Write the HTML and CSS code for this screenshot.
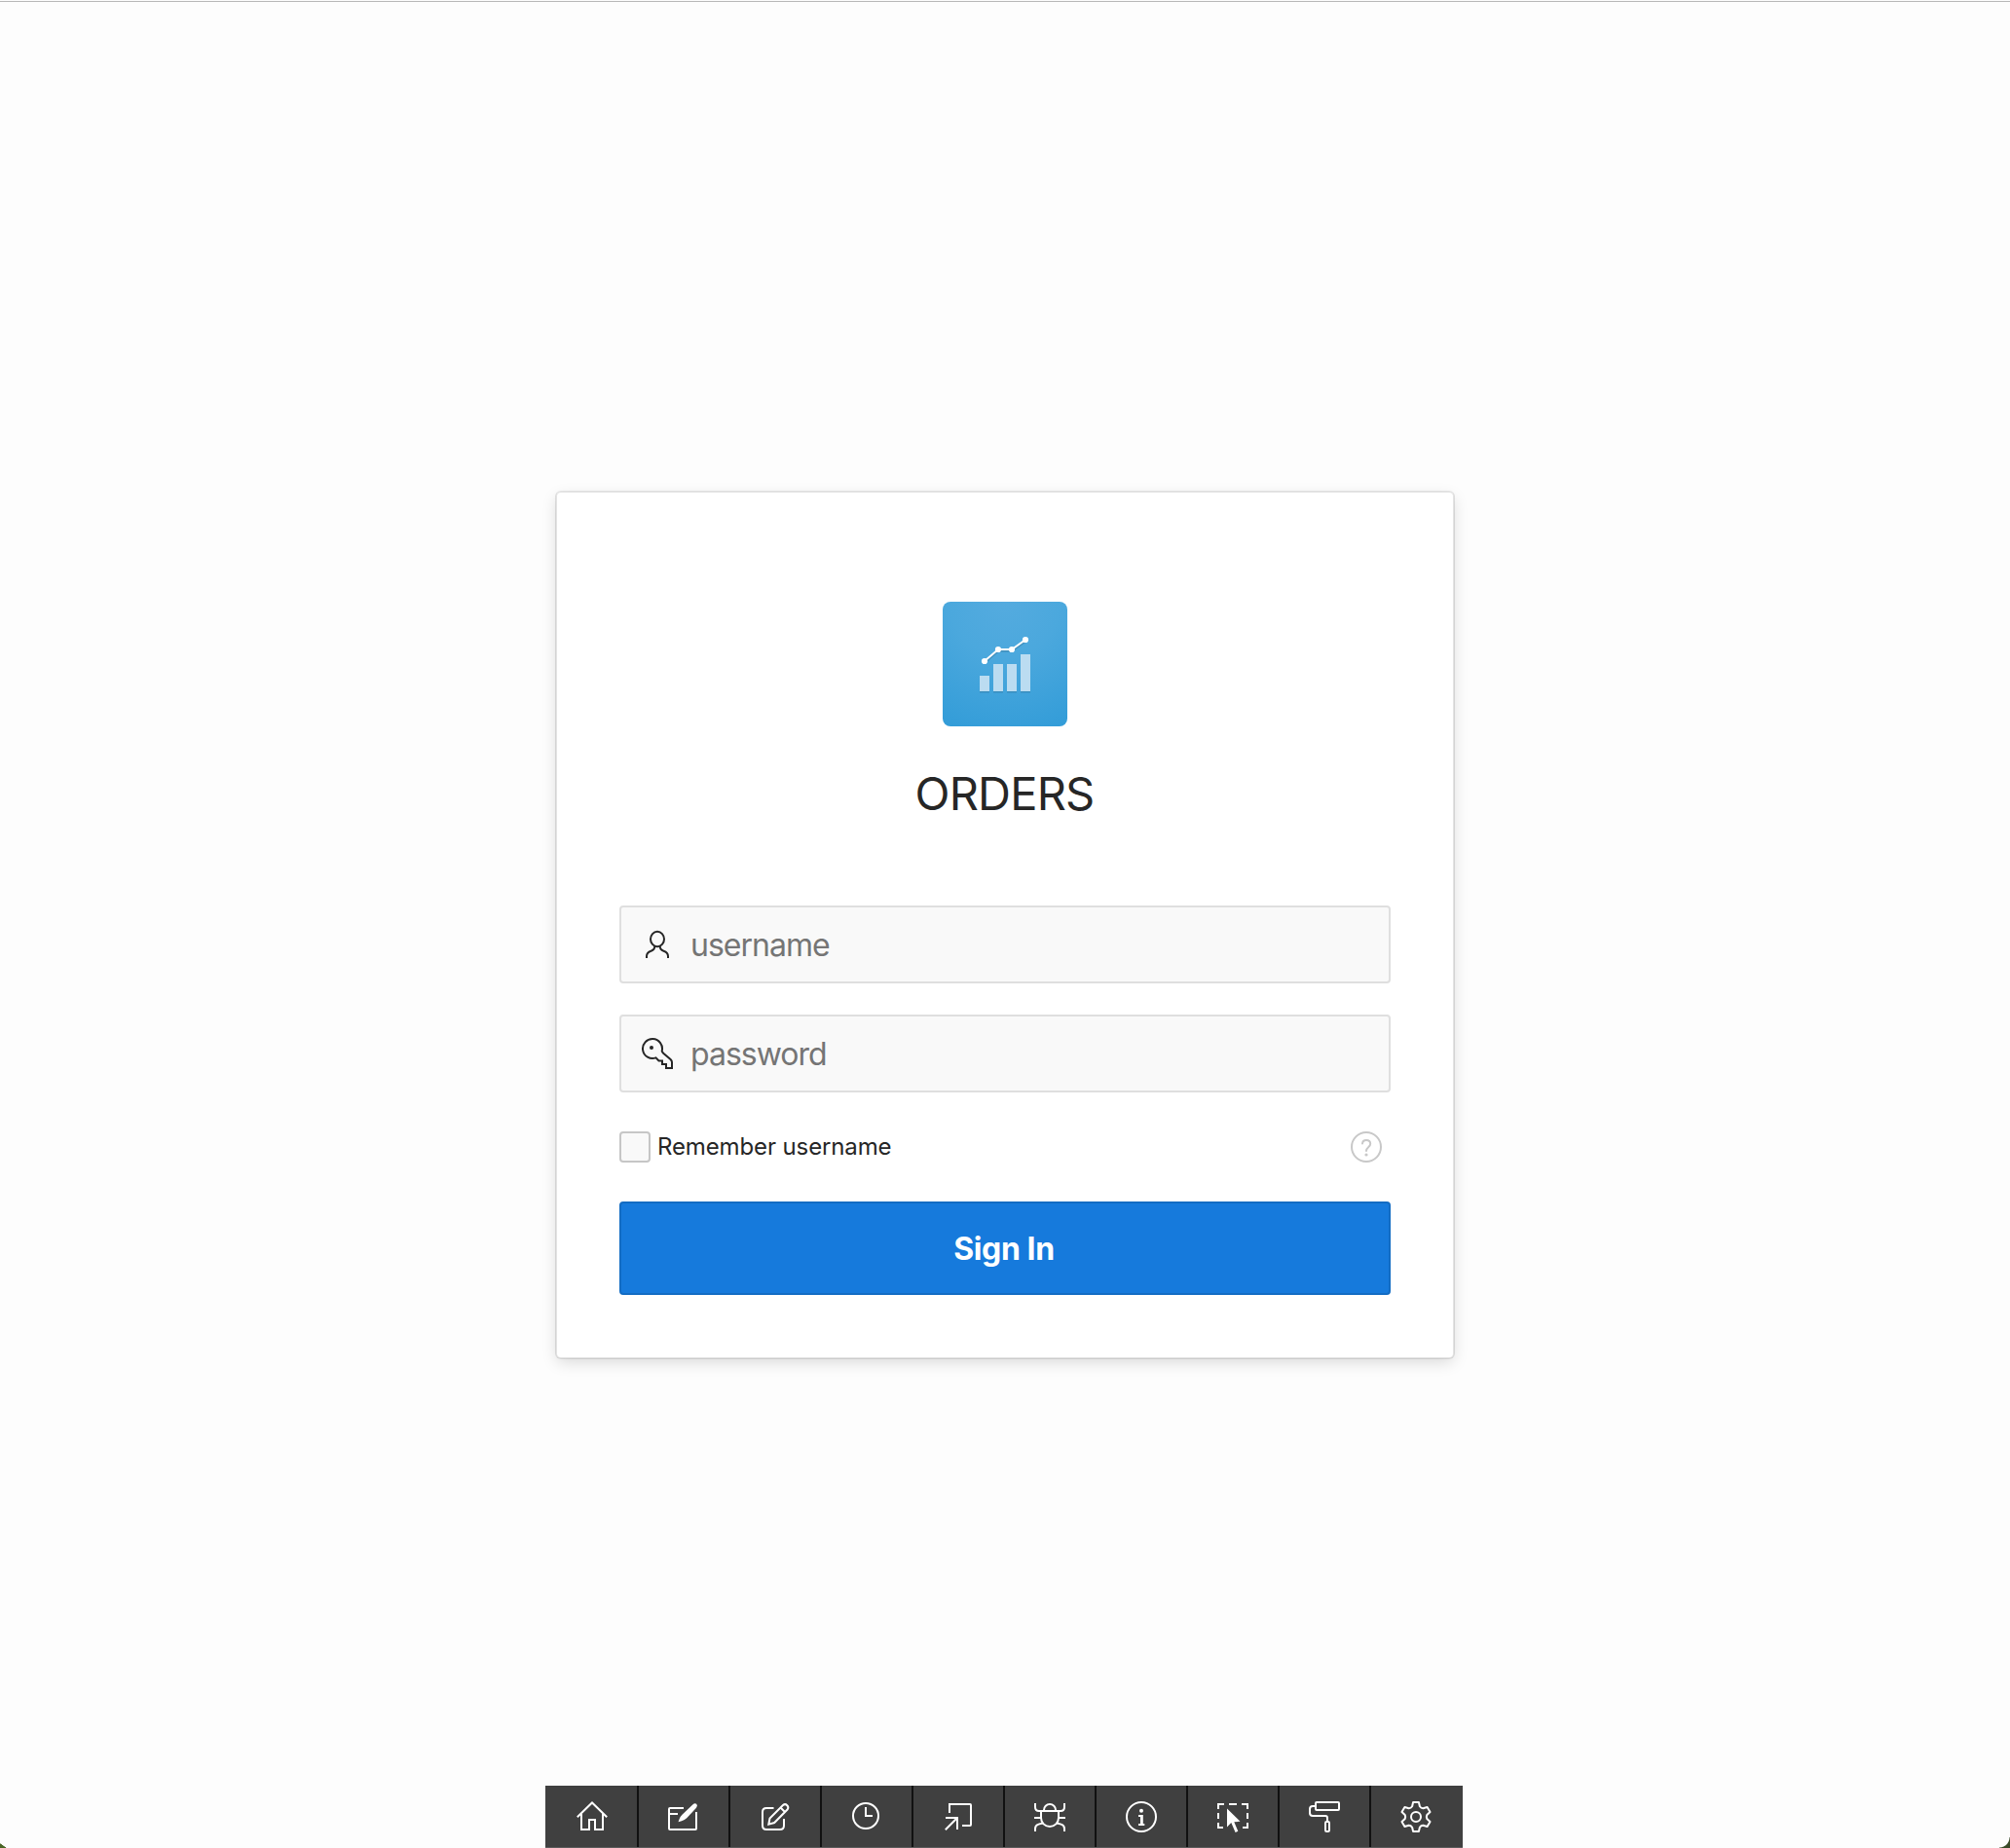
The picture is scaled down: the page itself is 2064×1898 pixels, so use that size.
FILE: index.html
```html
<!DOCTYPE html>
<html lang="en">
<head>
<meta charset="utf-8">
<title>ORDERS - Sign In</title>
<link rel="stylesheet" href="styles.css">
</head>
<body>
<main class="page">
  <form class="card">
    <svg class="app-icon" viewBox="0 0 128 128">
      <g fill="#000" opacity=".13"><path d="M38 77h10v16.500H38zM52 65h10v28.500H52zM66 65h10v28.500H66zM80 55h10v38.500H80z"/></g>
      <path d="M43 62.500L57 50.500H71L85 40.500" fill="none" stroke="#000" stroke-opacity=".13" stroke-width="2.500"/>
      <g fill="#bbdcf1"><path d="M38 76h10v16H38zM52 64h10v28H52zM66 64h10v28H66zM80 54h10v38H80z"/></g>
      <path d="M43 61L57 49H71L85 39" fill="none" stroke="#fff" stroke-width="2"/>
      <g fill="#fff"><circle cx="43" cy="61" r="3.100"/><circle cx="57" cy="49" r="3.100"/><circle cx="71" cy="49" r="3.100"/><circle cx="85" cy="39" r="3.100"/></g>
    </svg>
    <h1 class="title">ORDERS</h1>
    <div class="field">
      <svg class="icon" viewBox="0 0 32 32"><ellipse cx="16" cy="10.500" rx="7" ry="7.700"/><path d="M5 30v-2c0-3.500 2-4.500 4.500-5.300C12 21.800 13.300 21 13.300 18M27 30v-2c0-3.500-2-4.500-4.500-5.300C20 21.800 18.700 21 18.700 18"/></svg>
      <input class="input" type="text" placeholder="username" aria-label="username">
    </div>
    <div class="field">
      <svg class="icon" viewBox="0 0 32 32"><path d="M14.500 20.400A10 10 0 1 1 20.700 13.500C20.900 14.500 21.500 15 22.500 16L29.500 22Q31 23.500 31 25V31H25V27H21V23.500H17.500Z"/><circle class="solid" cx="10" cy="10" r="2"/></svg>
      <input class="input" type="password" placeholder="password" aria-label="password">
    </div>
    <div class="options">
      <label class="remember"><input class="check" type="checkbox"><span>Remember username</span></label>
      <svg class="icon help" viewBox="0 0 32 32"><circle cx="16" cy="16" r="15"/><path stroke-linecap="round" d="M12 12.500C12.200 10.300 13.700 9 16 9c2.400 0 4.200 1.500 4.200 3.700 0 3.500-4.200 3.500-4.200 7.300"/><circle class="solid" cx="16" cy="24" r="1.600"/></svg>
    </div>
    <button class="sign-in" type="button">Sign In</button>
  </form>
</main>
<nav class="toolbar">
  <a class="tool"><svg class="icon" viewBox="0 0 32 32"><path d="M.8 16.300L16 1.500L31.200 16.300M5 13V29H13V19H19V29H27V13"/></svg></a>
  <a class="tool"><svg class="icon" viewBox="0 0 32 32"><path d="M16 7H2Q1 7 1 8V28Q1 29 2 29H28Q29 29 29 28V11M1 13H10"/><path class="solid" d="M10.500 21.200L11.500 18.500Q12.500 15.700 14.500 13.800L25.300 3.500Q27.500 1.500 29.200 2.800Q30.800 4.500 29 6.800L19.200 17.300Q17 19.500 14 20.300Z"/></svg></a>
  <a class="tool"><svg class="icon" viewBox="0 0 32 32"><path d="M14.500 7H7Q3 7 3 11V25Q3 29 7 29H21Q25 29 25 25V18M9.300 23.700L10.500 17.500L24 4A3.200 3.200 0 0 1 28.500 8.500L15.200 22ZM21.500 6.500L26 11"/></svg></a>
  <a class="tool"><svg class="icon" viewBox="0 0 32 32"><circle cx="15" cy="15" r="13"/><path d="M15 6V15H22"/></svg></a>
  <a class="tool"><svg class="icon" viewBox="0 0 32 32"><path d="M7 12V3H28Q29 3 29 4V24Q29 25 28 25H20M3 17H15V29M15 17L2.800 29.200"/></svg></a>
  <a class="tool"><svg class="icon" viewBox="0 0 32 32"><path d="M1 2V6Q1 10 5 10H27Q31 10 31 6V2M7 10V17A9 9 0 0 0 25 17V10M10 10V9A6 6 0 0 1 22 9V10M0 17H7M25 17H32M8.500 22.500L4.500 23.600Q1 24.700 1 28V31M23.500 22.500L27.500 23.600Q31 24.700 31 28V31"/></svg></a>
  <a class="tool"><svg class="icon" viewBox="0 0 32 32"><circle cx="16" cy="16" r="15"/><circle class="solid" cx="16" cy="9.800" r="2"/><path d="M13 15H16.500V24M13 24H19.300"/><path stroke-width="2.600" d="M16.300 14V24"/></svg></a>
  <a class="tool"><svg class="icon" viewBox="0 0 32 32"><path d="M1 8V3H7M12 3H20M25 3H31V8M1 12V18M31 12V18M1 22V27H6M31 22V27H26"/><path class="solid" d="M10 7.500V26.500L14.300 22L18.600 32L21.300 30.800L17.300 21.300L23.500 20.800Z"/></svg></a>
  <a class="tool"><svg class="icon" viewBox="0 0 32 32"><rect x="7" y="1" width="24" height="8" rx="1"/><path d="M7 5H4Q1 5 1 8V12Q1 15 4 15H17Q19 15 19 17V21"/><rect x="17" y="21" width="4" height="10" rx="1.200"/></svg></a>
  <a class="tool"><svg class="icon" viewBox="0 0 32 32"><path stroke-linejoin="round" d="M13.100 1H18.900L19.900 5.200Q21.300 7.300 23.400 7.200L27.550 6L30.500 11L27.300 14Q26.300 16 27.300 18L30.500 21L27.550 26L23.400 24.800Q21.300 24.700 19.900 26.800L18.900 31H13.100L12.100 26.800Q10.700 24.700 8.600 24.800L4.450 26L1.500 21L4.700 18Q5.700 16 4.700 14L1.500 11L4.450 6L8.600 7.200Q10.700 7.300 12.100 5.200Z"/><circle cx="16" cy="16" r="5"/></svg></a>
</nav>
</body>
</html>
```
FILE: styles.css
```css
* { box-sizing: border-box; }
body {
  margin: 0;
  height: 1898px;
  padding-top: 1px;
  display: flex;
  flex-direction: column;
  align-items: center;
  background: #fdfdfd;
  color: #262626;
  font-family: Inter, "Liberation Sans", sans-serif;
  overflow: hidden;
}
/* rounded window corners */
body::before, body::after {
  content: "";
  position: absolute;
  bottom: 0;
}
body::before {
  left: 0;
  width: 7px;
  height: 5px;
  background: linear-gradient(to top right, #4a6526 45%, transparent 52%);
}
body::after {
  right: 0;
  width: 11px;
  height: 11px;
  background: radial-gradient(circle at 0 0, transparent 10px, #3a4a28 11px);
}
.page {
  width: 100%;
  flex: 1;
  border-top: 1px solid #b8b8b8;
  padding-top: 502px;
}
.card {
  width: 924px;
  height: 892px;
  margin: 0 auto;
  padding: 112px 64px 64px;
  display: flex;
  flex-direction: column;
  background: #fff;
  background-clip: padding-box;
  border: 2px solid rgba(0, 0, 0, .1);
  border-top-color: rgba(0, 0, 0, .09);
  border-radius: 6px;
  box-shadow: 0 5px 16px -2px rgba(0, 0, 0, .15);
}
.app-icon {
  width: 128px;
  height: 128px;
  align-self: center;
  border-radius: 8px;
  background: radial-gradient(circle at 50% 0, #54abdf, #4ba8dd 40%, #329cd8);
}
.title {
  margin: 36px 1px 82px 0;
  height: 66px;
  line-height: 66px;
  font-size: 47px;
  font-weight: 400;
  letter-spacing: -.8px;
  text-align: center;
}
.field {
  height: 80px;
  margin-bottom: 32px;
  padding-left: 21px;
  display: flex;
  align-items: center;
  gap: 18px;
  background: #f9f9f9;
  border: 2px solid #dfdfdf;
  border-radius: 4px;
}
.icon {
  width: 32px;
  height: 32px;
  flex: none;
  fill: none;
  stroke: currentColor;
  stroke-width: 2;
}
.icon .solid { fill: currentColor; stroke: none; }
.input {
  flex: 1;
  height: 76px;
  padding: 1px 0 0;
  border: 0;
  background: none;
  font: 400 32px Inter, sans-serif;
  letter-spacing: -1px;
}
.input::placeholder { color: #757575; opacity: 1; }
.options {
  height: 32px;
  margin: 8px 0 40px;
  padding-right: 9px;
  display: flex;
  align-items: center;
  justify-content: space-between;
}
.remember {
  display: flex;
  align-items: center;
  gap: 7px;
  font-size: 24px;
  line-height: 32px;
  letter-spacing: -.12px;
}
.check {
  appearance: none;
  width: 32px;
  height: 32px;
  margin: 0;
  background: #f9f9f9;
  border: 2px solid #c6c6c6;
  border-radius: 4px;
}
.help { color: #c8c8c8; }
.sign-in {
  height: 96px;
  padding: 0 2px 0 0;
  border: 2px solid #136cc3;
  border-radius: 4px;
  background: #167adc;
  color: #fff;
  font: 700 32px Inter, sans-serif;
  letter-spacing: -.4px;
}
.toolbar {
  width: 942px;
  height: 64px;
  padding-left: 2px;
  margin-right: 2px;
  display: flex;
  background: #404040;
  color: #fff;
  border-bottom: 1px solid #5c5c5c;
}
.tool {
  width: 94px;
  padding-top: 16px;
  display: flex;
  justify-content: center;
  border-right: 2px solid #111;
}
.tool:last-child { border-right-color: transparent; }
```
